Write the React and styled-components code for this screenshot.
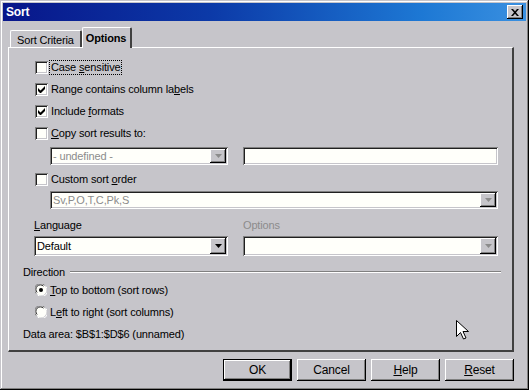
import React from 'react';
import styled, { createGlobalStyle, css } from 'styled-components';

const face = '#c6c5ca';

const GlobalStyle = createGlobalStyle`
  body {
    margin: 0;
    background: ${face};
    font-family: "Liberation Sans", Arial, sans-serif;
    font-size: 11px;
    letter-spacing: -0.15px;
    color: #000;
  }
`;

// classic 3D borders
const raised = css`
  box-shadow: inset -1px -1px 0 #000, inset 1px 1px 0 #fff, inset -2px -2px 0 #808080;
`;

const sunken = css`
  box-shadow: inset 1px 1px 0 #808080, inset -1px -1px 0 #fff, inset 2px 2px 0 #202020, inset -2px -2px 0 ${face};
`;

const Window = styled.div`
  position: relative;
  width: 529px;
  height: 390px;
  box-sizing: border-box;
  padding: 3px;
  background: ${face};
  box-shadow: inset -1px -1px 0 #000, inset 1px 1px 0 ${face}, inset -2px -2px 0 #808080, inset 2px 2px 0 #fff;
  display: flex;
  flex-direction: column;
  overflow: hidden;
`;

const TitleBar = styled.div`
  height: 18px;
  display: flex;
  align-items: center;
  justify-content: space-between;
  padding: 0 3px 0 3px;
  background: linear-gradient(90deg, #08168a 0%, #0c3aa8 40%, #1d78d4 80%, #3a90e0 100%);
  color: #fff;
  font-weight: bold;
  font-size: 12px;
`;

const CloseButton = styled.div`
  width: 16px;
  height: 14px;
  background: ${face};
  ${raised};
  display: flex;
  align-items: center;
  justify-content: center;
`;

const Body = styled.div`
  flex: 1;
  padding: 6px 12px 0 5px;
  display: flex;
  flex-direction: column;
`;

const TabRow = styled.div`
  display: flex;
  align-items: flex-end;
  height: 20px;
  padding-left: 2px;
  position: relative;
  z-index: 1;
`;

const Tab = styled.div`
  box-sizing: border-box;
  height: ${({ $active }) => ($active ? '21px' : '17px')};
  margin-bottom: ${({ $active }) => ($active ? '-1px' : '0')};
  padding: ${({ $active }) => ($active ? '3px 4px 0 3px' : '2px 6px 0 6px')};
  font-weight: ${({ $active }) => ($active ? 'bold' : 'normal')};
  background: ${face};
  border-top: 1px solid #fff;
  border-left: 1px solid #fff;
  border-right: 2px solid #404040;
  border-radius: 2px 2px 0 0;
  line-height: 14px;
`;

const Panel = styled.div`
  height: 305px;
  box-sizing: border-box;
  background: ${face};
  border-top: 1px solid #fff;
  border-left: 1px solid #fff;
  border-right: 2px solid #404040;
  border-bottom: 2px solid #404040;
  padding: 8px 14px 0 14px;
  display: flex;
  flex-direction: column;
`;

const CheckRow = styled.div`
  height: 22px;
  display: flex;
  align-items: center;
  gap: 2px;
  padding-left: 12px;
  margin-top: ${({ $mt }) => $mt || 0}px;
`;

const Box = styled.div`
  width: 13px;
  height: 13px;
  box-sizing: border-box;
  background: #fffffa;
  ${sunken};
  display: flex;
  align-items: center;
  justify-content: center;
`;

const Label = styled.span`
  color: ${({ $disabled }) => ($disabled ? '#8c8c8c' : '#000')};
  line-height: 13px;
  padding: 0 1px;
  outline: ${({ $focus }) => ($focus ? '1px dotted #000' : 'none')};
`;

const ComboGrid = styled.div`
  display: grid;
  grid-template-columns: ${({ $indent }) => ($indent ? '27px 178px 15px 1fr' : '11px 194px 15px 1fr')};
  margin-top: ${({ $mt }) => $mt || 0}px;
  row-gap: 4px;
`;

const Field = styled.div`
  grid-column: ${({ $span }) => $span};
  height: ${({ $h }) => $h || 18}px;
  box-sizing: border-box;
  background: #fffffa;
  ${sunken};
  display: flex;
  align-items: center;
  padding: 2px 2px 2px 3px;
  color: ${({ $disabled }) => ($disabled ? '#8c8c8c' : '#000')};
`;

const FieldText = styled.span`
  flex: 1;
  white-space: nowrap;
`;

const DropButton = styled.div`
  width: 16px;
  align-self: stretch;
  background: ${face};
  ${raised};
  display: flex;
  align-items: center;
  justify-content: center;
`;

const GridLabel = styled.div`
  grid-column: ${({ $span }) => $span};
  line-height: 13px;
  color: ${({ $disabled }) => ($disabled ? '#8c8c8c' : '#000')};
`;

const GroupHeader = styled.div`
  display: flex;
  align-items: center;
  margin-top: 9px;
  line-height: 14px;
`;

const Rule = styled.div`
  flex: 1;
  margin-left: 5px;
  margin-right: -3px;
  border-top: 1px solid #808080;
  border-bottom: 1px solid #fff;
`;

const Info = styled.div`
  margin-top: 4px;
  line-height: 14px;
`;

const ButtonRow = styled.div`
  display: flex;
  justify-content: flex-end;
  gap: 5px;
  margin-top: 7px;
`;

const Button = styled.div`
  width: 69px;
  height: 22px;
  box-sizing: border-box;
  background: ${face};
  display: flex;
  align-items: center;
  justify-content: center;
  ${({ $default }) =>
    $default
      ? css`
          box-shadow: inset 0 0 0 1px #000, inset -2px -2px 0 #000, inset 2px 2px 0 #fff, inset -3px -3px 0 #808080;
        `
      : raised};
  font-size: 12px;
`;

const Pointer = styled.svg`
  position: absolute;
  left: 456px;
  top: 320px;
`;

const Arrow = ({ disabled }) => (
  <svg width="7" height="4" viewBox="0 0 7 4">
    <path d="M0 0h7L3.5 4z" fill={disabled ? '#8c8c8c' : '#000'} />
  </svg>
);

const Check = () => (
  <svg width="7" height="7" viewBox="0 0 7 7">
    <path d="M0 2v3l2 2h1l4-4V0L2.5 4.5z" fill="#000" />
  </svg>
);

const Radio = ({ checked }) => (
  <svg width="12" height="12" viewBox="0 0 12 12">
    <circle cx="6" cy="6" r="5.5" fill="#fffffa" />
    <path d="M1.2 9.5A5.5 5.5 0 0 1 9.5 1.2" fill="none" stroke="#808080" strokeWidth="1" />
    <path d="M2.2 8.5A4.3 4.3 0 0 1 8.5 2.2" fill="none" stroke="#303030" strokeWidth="1" />
    <path d="M10.8 2.5A5.5 5.5 0 0 1 2.5 10.8" fill="none" stroke="#fff" strokeWidth="1" />
    {checked && <circle cx="6" cy="6" r="2" fill="#000" />}
  </svg>
);

function CheckOption({ checked, focus, mt, children }) {
  return (
    <CheckRow $mt={mt}>
      <Box>{checked && <Check />}</Box>
      <Label $focus={focus}>{children}</Label>
    </CheckRow>
  );
}

function RadioOption({ checked, children }) {
  return (
    <CheckRow>
      <Radio checked={checked} />
      <Label>{children}</Label>
    </CheckRow>
  );
}

function Combo({ span, text, disabled, h }) {
  return (
    <Field $span={span} $disabled={disabled} $h={h}>
      <FieldText>{text}</FieldText>
      <DropButton>
        <Arrow disabled={disabled} />
      </DropButton>
    </Field>
  );
}

export default function App() {
  return (
    <>
      <GlobalStyle />
      <Window>
        <TitleBar>
          <span>Sort</span>
          <CloseButton>
            <svg width="8" height="7" viewBox="0 0 8 7">
              <path d="M0 0h2l2 2.2L6 0h2L5 3.5 8 7H6L4 4.8 2 7H0l3-3.5z" fill="#000" />
            </svg>
          </CloseButton>
        </TitleBar>
        <Body>
          <TabRow>
            <Tab>Sort Criteria</Tab>
            <Tab $active>Options</Tab>
          </TabRow>
          <Panel>
            <CheckOption focus>
              Case <u>s</u>ensitive
            </CheckOption>
            <CheckOption checked>
              Range contains column la<u>b</u>els
            </CheckOption>
            <CheckOption checked>
              Include <u>f</u>ormats
            </CheckOption>
            <CheckOption>
              <u>C</u>opy sort results to:
            </CheckOption>
            <ComboGrid $indent $mt={3}>
              <Combo span="2" text="- undefined -" disabled />
              <Field $span="4" />
            </ComboGrid>
            <CheckOption mt={3}>
              Custom sort <u>o</u>rder
            </CheckOption>
            <ComboGrid $indent $mt={1}>
              <Combo span="2 / 5" text="Sv,P,O,T,C,Pk,S" disabled />
            </ComboGrid>
            <ComboGrid $mt={10}>
              <GridLabel $span="2">
                <u>L</u>anguage
              </GridLabel>
              <GridLabel $span="4" $disabled>
                Options
              </GridLabel>
              <Combo span="2" text="Default" h={20} />
              <Combo span="4" text="" disabled h={20} />
            </ComboGrid>
            <GroupHeader>
              Direction
              <Rule />
            </GroupHeader>
            <RadioOption checked>
              <u>T</u>op to bottom (sort rows)
            </RadioOption>
            <RadioOption>
              L<u>e</u>ft to right (sort columns)
            </RadioOption>
            <Info>Data area: $B$1:$D$6 (unnamed)</Info>
          </Panel>
          <ButtonRow>
            <Button $default>OK</Button>
            <Button>Cancel</Button>
            <Button>
              <span>
                <u>H</u>elp
              </span>
            </Button>
            <Button>
              <span>
                <u>R</u>eset
              </span>
            </Button>
          </ButtonRow>
        </Body>
        <Pointer width="13" height="21" viewBox="0 0 13 21">
          <path d="M0.5 0.5v16l4-4 3 6.5 2.5-1-3-6.5h5.5z" fill="#fff" stroke="#000" strokeWidth="1" />
        </Pointer>
      </Window>
    </>
  );
}
